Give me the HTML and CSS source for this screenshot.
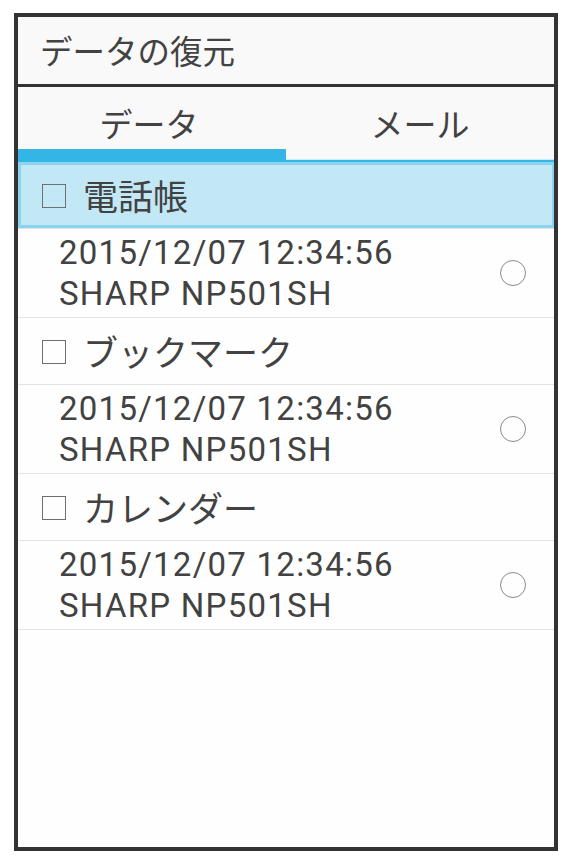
FILE: index.html
```html
<!DOCTYPE html>
<html lang="ja">
<head>
<meta charset="utf-8">
<title>データの復元</title>
<link rel="stylesheet" href="styles.css">
</head>
<body>
<div class="frame">
  <header class="title">データの復元</header>
  <nav class="tabs">
    <div class="tab active">データ</div>
    <div class="tab">メール</div>
  </nav>
  <ul class="list">
    <li class="head selected"><span class="check"></span><span class="label">電話帳</span></li>
    <li class="entry">
      <div class="lines"><div>2015/12/07 12:34:56</div><div>SHARP NP501SH</div></div>
      <span class="radio"></span>
    </li>
    <li class="head"><span class="check"></span><span class="label">ブックマーク</span></li>
    <li class="entry">
      <div class="lines"><div>2015/12/07 12:34:56</div><div>SHARP NP501SH</div></div>
      <span class="radio"></span>
    </li>
    <li class="head"><span class="check"></span><span class="label">カレンダー</span></li>
    <li class="entry">
      <div class="lines"><div>2015/12/07 12:34:56</div><div>SHARP NP501SH</div></div>
      <span class="radio"></span>
    </li>
  </ul>
</div>
</body>
</html>
```
FILE: styles.css
```css
* { box-sizing: border-box; }
html, body { margin: 0; padding: 0; background: #ffffff; }
body {
  font-family: "Noto Sans CJK JP", "Noto Sans", sans-serif;
  color: #424242;
}
.frame {
  margin: 13px 0 0 14px;
  width: 544px;
  height: 838px;
  border: 4px solid #333333;
  background: #fefefe;
  display: flex;
  flex-direction: column;
}
.title {
  height: 70px;
  background: #f9f9f9;
  border-bottom: 3px solid #333333;
  display: flex;
  align-items: center;
  padding: 0 0 2px 22px;
  font-size: 32.5px;
  line-height: 40px;
}
.tabs {
  display: flex;
  height: 75px;
  background: #f9f9f9;
  border-bottom: 2px solid #33b5e5;
}
.tab {
  flex: 1 1 0;
  height: 73px;
  padding-top: 16px;
  text-align: center;
  font-size: 33px;
  line-height: 40px;
  border-bottom: 1px solid #cdeaf6;
  overflow: hidden;
}
.tab.active {
  border-bottom: 11px solid #33b5e5;
  text-indent: -6px;
}
.list {
  list-style: none;
  margin: 0;
  padding: 0;
}
.head {
  height: 67px;
  border-bottom: 1px solid #e3e3e3;
  display: flex;
  align-items: center;
  padding-left: 24px;
  font-size: 35px;
  line-height: 40px;
}
.head.selected {
  background: #c2e8f6;
  border: 3px solid #8ad4f0;
  border-right-width: 2px;
  box-shadow: 0 1px 0 #e3e3e3;
  padding-left: 21px;
  margin-bottom: 1px;
  height: 66px;
}
.check {
  width: 24px;
  height: 24px;
  border: 1.5px solid #707070;
  flex: none;
  margin-top: 1px;
}
.label {
  margin-left: 17px;
}
.entry {
  height: 89px;
  border-bottom: 1px solid #e3e3e3;
  display: flex;
  align-items: center;
  padding-left: 41px;
  padding-right: 28px;
  font-family: Roboto, "Noto Sans", sans-serif;
  font-size: 33px;
  line-height: 41px;
  letter-spacing: 1.25px;
}
.lines { flex: 1; }
.radio {
  width: 26px;
  height: 26px;
  border-radius: 50%;
  border: 1.5px solid #8a8a8a;
  flex: none;
}
```
